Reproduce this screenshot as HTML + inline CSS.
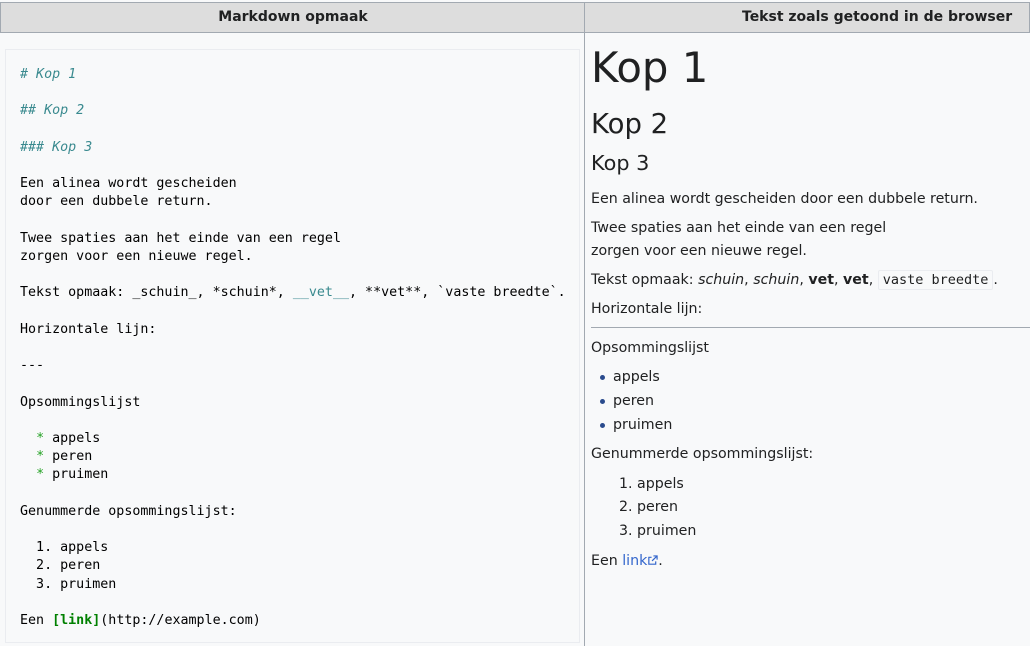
<!DOCTYPE html>
<html><head><meta charset="utf-8"><style>
*{margin:0;padding:0;box-sizing:border-box}
body{width:1030px;height:646px;overflow:hidden;background:#f8f9fa;font-family:"DejaVu Sans","Liberation Sans",sans-serif;color:#202122;position:relative}
.hdr{position:absolute;top:2px;height:31px;background:#dddddd;border:1px solid #a2a9b1;font-weight:bold;font-size:14px;line-height:29px}
.vl{position:absolute;left:584px;top:2px;width:1px;height:644px;background:#a2a9b1}
pre{position:absolute;left:5px;top:49px;width:575px;height:594px;border:1px solid #eaecf0;background:#f8f9fa;padding:16px 0 0 14px;font-family:"DejaVu Sans Mono","Liberation Mono",monospace;font-size:13.33px;line-height:18.2px;color:#000}
.h{color:#3a8a8f;font-style:italic}
.g{color:#20a020}
.lk{color:#008000;font-weight:bold}
.r{position:absolute;left:591px;font-size:14.2px;white-space:nowrap;line-height:20px}
code{font-family:"DejaVu Sans Mono",monospace;font-size:13.5px;background:#f8f9fa;border:1px solid #eaecf0;border-radius:2px;padding:1px 4px}
.dot{position:absolute;left:600px;width:5px;height:5px;border-radius:50%;background:#2a4b8d}
</style></head><body>
<div class="hdr" style="left:0;width:586px;text-align:center">Markdown opmaak</div>
<div class="hdr" style="left:584px;width:446px;"><span style="position:absolute;left:157px">Tekst zoals getoond in de browser</span></div>
<div class="vl"></div>
<pre><span class="h"># Kop 1</span>

<span class="h">## Kop 2</span>

<span class="h">### Kop 3</span>

Een alinea wordt gescheiden
door een dubbele return.

Twee spaties aan het einde van een regel
zorgen voor een nieuwe regel.

Tekst opmaak: _schuin_, *schuin*, <span class="h" style="font-style:normal">__vet__</span>, **vet**, `vaste breedte`.

Horizontale lijn:

---

Opsommingslijst

  <span class="g">*</span> appels
  <span class="g">*</span> peren
  <span class="g">*</span> pruimen

Genummerde opsommingslijst:

  1. appels
  2. peren
  3. pruimen

Een <span class="lk">[link]</span>(http://example.com)</pre>

<div class="r" style="top:43px;font-size:41.8px;line-height:50px">Kop 1</div>
<div class="r" style="top:107px;font-size:27.5px;line-height:34px">Kop 2</div>
<div class="r" style="top:149px;font-size:20.8px;line-height:28px">Kop 3</div>
<div class="r" style="top:189px">Een alinea wordt gescheiden door een dubbele return.</div>
<div class="r" style="top:218px">Twee spaties aan het einde van een regel</div>
<div class="r" style="top:241px">zorgen voor een nieuwe regel.</div>
<div class="r" style="top:270px">Tekst opmaak: <i>schuin</i>, <i>schuin</i>, <b>vet</b>, <b>vet</b>, <code>vaste breedte</code>.</div>
<div class="r" style="top:299px">Horizontale lijn:</div>
<div style="position:absolute;left:591px;top:327px;width:439px;height:1px;background:#a2a9b1"></div>
<div class="r" style="top:338px">Opsommingslijst</div>
<div class="dot" style="top:375px"></div><div class="r" style="left:613px;top:367px">appels</div>
<div class="dot" style="top:399px"></div><div class="r" style="left:613px;top:391px">peren</div>
<div class="dot" style="top:423px"></div><div class="r" style="left:613px;top:415px">pruimen</div>
<div class="r" style="top:444px">Genummerde opsommingslijst:</div>
<div class="r" style="left:619px;top:474px">1. appels</div>
<div class="r" style="left:619px;top:497px">2. peren</div>
<div class="r" style="left:619px;top:521px">3. pruimen</div>
<div class="r" style="top:551px">Een <span style="color:#3366cc">link<svg width="11" height="11" viewBox="0 0 12 12" style="vertical-align:-1px"><g fill="none" stroke="#3366cc" stroke-width="1.3"><path d="M5 2.5H2v7.5h7.5V7"/><path d="M7 1h4v4M11 1L5.5 6.5"/></g></svg></span>.</div>
</body></html>
